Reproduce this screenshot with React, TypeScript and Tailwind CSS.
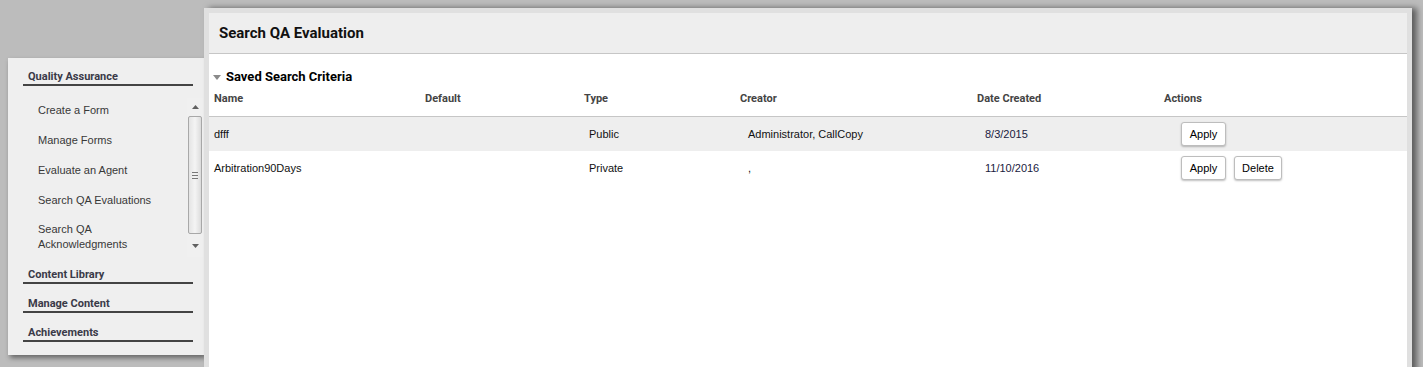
import React from "react";

const sideItems = [
  "Create a Form",
  "Manage Forms",
  "Evaluate an Agent",
  "Search QA Evaluations",
];

function SectionHeader({ label, className }: { label: string; className?: string }) {
  return (
    <div
      className={`ml-[15px] mr-[11px] border-b-2 border-[#444444] pl-[5px] text-[11px] leading-[14px] font-bold text-[#3a3a48] ${className ?? ""}`}
      style={{ fontFamily: "Roboto, 'Liberation Sans', sans-serif" }}
    >
      {label}
    </div>
  );
}

function FakeScrollbar() {
  return (
    <div className="absolute right-[1px] top-0 w-[16px] h-[159px] bg-[#f0f0f0] flex flex-col items-center">
      <div className="h-[17px] w-full flex items-center justify-center">
        <svg width="7" height="4" viewBox="0 0 7 4">
          <polygon points="0,4 3.5,0 7,4" fill="#606060" />
        </svg>
      </div>
      <div className="mt-[1px] w-[14px] h-[118px] border border-[#a8a8a8] rounded-[2px] bg-gradient-to-r from-[#e4e4e4] via-[#f4f4f4] to-[#dcdcdc] flex items-center justify-center">
        <div className="flex flex-col gap-[2px]">
          <div className="w-[6px] h-px bg-[#777]" />
          <div className="w-[6px] h-px bg-[#777]" />
          <div className="w-[6px] h-px bg-[#777]" />
        </div>
      </div>
      <div className="flex-1 w-full flex items-center justify-center">
        <svg width="7" height="4" viewBox="0 0 7 4">
          <polygon points="0,0 3.5,4 7,0" fill="#606060" />
        </svg>
      </div>
    </div>
  );
}

function Sidebar() {
  return (
    <div className="ml-[8px] mt-[58px] w-[196px] h-[297px] shrink-0 bg-[#efefef] pt-[12px] shadow-[2px_3px_5px_rgba(0,0,0,0.45)]">
      <SectionHeader label="Quality Assurance" />
      <div
        className="relative mt-[12px] h-[159px] overflow-hidden"
        style={{ fontFamily: "'Liberation Sans', Arial, sans-serif" }}
      >
        <div className="pt-[4px] pl-[30px] text-[11px] text-[#383838]">
          {sideItems.map((item) => (
            <div key={item} className="leading-[16px] pb-[14px]">
              {item}
            </div>
          ))}
          <div className="leading-[15px] pb-[14px]">
            Search QA
            <br />
            Acknowledgments
          </div>
        </div>
        <FakeScrollbar />
      </div>
      <SectionHeader label="Content Library" className="mt-[11px]" />
      <SectionHeader label="Manage Content" className="mt-[13px]" />
      <SectionHeader label="Achievements" className="mt-[13px]" />
    </div>
  );
}

const cols = "grid grid-cols-[216px_159px_156px_237px_187px_1fr]";

function Btn({ label, w }: { label: string; w: string }) {
  return (
    <button
      className={`${w} h-[24px] bg-white border border-[#bdbdbd] rounded-[3px] shadow-[0_1px_2px_rgba(0,0,0,0.25)] text-[11px] text-black`}
      style={{ fontFamily: "'Liberation Sans', Arial, sans-serif" }}
    >
      {label}
    </button>
  );
}

const rows = [
  { name: "dfff", type: "Public", creator: "Administrator, CallCopy", date: "8/3/2015", del: false },
  { name: "Arbitration90Days", type: "Private", creator: ",", date: "11/10/2016", del: true },
];

function MainPanel() {
  return (
    <div className="relative z-10 mt-[8px] w-[1208px] h-[370px] shrink-0 border-[5px] border-[#e0e0e0] bg-white shadow-[5px_0_6px_rgba(0,0,0,0.5)]">
      <div className="h-[41px] bg-[#eeeeee] border-b border-[#c6c6c6] flex items-center pl-[10px]">
        <h1
          className="text-[15px] font-bold text-[#111111]"
          style={{ fontFamily: "Roboto, 'Liberation Sans', sans-serif" }}
        >
          Search QA Evaluation
        </h1>
      </div>
      <div className="pt-[15px]" style={{ fontFamily: "Roboto, 'Liberation Sans', sans-serif" }}>
        <div className="flex items-center pl-[4px] gap-[5px] leading-[16px]">
          <svg width="8" height="5" viewBox="0 0 8 5">
            <polygon points="0,0 8,0 4,5" fill="#8a8a8a" />
          </svg>
          <span className="text-[13px] font-bold text-black">Saved Search Criteria</span>
        </div>
        <div className={`${cols} mt-[7px] pb-[10px] border-b border-[#c6c6c6] text-[11px] leading-[14px] font-bold text-[#444444]`}>
          <div className="pl-[5px]">Name</div>
          <div>Default</div>
          <div>Type</div>
          <div>Creator</div>
          <div>Date Created</div>
          <div>Actions</div>
        </div>
        {rows.map((r, i) => (
          <div
            key={r.name}
            className={`${cols} h-[34px] items-center text-[11px] text-[#111111] ${i === 0 ? "bg-[#eeeeee]" : "bg-white"}`}
            style={{ fontFamily: "'Liberation Sans', Arial, sans-serif" }}
          >
            <div className="pl-[5px]">{r.name}</div>
            <div />
            <div className="pl-[5px]">{r.type}</div>
            <div className="pl-[8px]">{r.creator}</div>
            <div className="pl-[8px] text-[#1a1a40]">{r.date}</div>
            <div className="pl-[17px] flex gap-[8px]">
              <Btn label="Apply" w="w-[45px]" />
              {r.del && <Btn label="Delete" w="w-[48px]" />}
            </div>
          </div>
        ))}
      </div>
    </div>
  );
}

export default function App() {
  return (
    <div className="w-[1423px] h-[367px] bg-[#bcbcbc] overflow-hidden flex items-start">
      <Sidebar />
      <MainPanel />
    </div>
  );
}
